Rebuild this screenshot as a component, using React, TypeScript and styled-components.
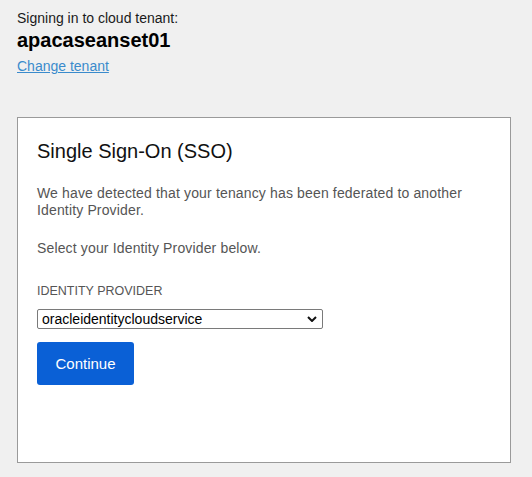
import styled, { createGlobalStyle } from "styled-components";

const GlobalStyle = createGlobalStyle`
  html, body {
    margin: 0;
    padding: 0;
    background-color: #f0f0f0;
  }
  body {
    font-family: "Liberation Sans", Arial, sans-serif;
    color: #222;
  }
`;

const Page = styled.div`
  padding: 10px 0 0 17px;
  display: flex;
  flex-direction: column;
  align-items: flex-start;
`;

const TenantHeader = styled.div`
  display: flex;
  flex-direction: column;
  align-items: flex-start;
`;

const Caption = styled.div`
  font-size: 14px;
  line-height: 16px;
  color: #1a1a1a;
`;

const TenantName = styled.div`
  font-size: 20px;
  line-height: 23px;
  font-weight: bold;
  color: #000;
  margin-top: 3px;
`;

const Link = styled.a`
  font-size: 14px;
  line-height: 16px;
  color: #3a8bcc;
  text-decoration: underline;
  margin-top: 6px;
  cursor: pointer;
`;

const Card = styled.section`
  box-sizing: border-box;
  width: 494px;
  height: 346px;
  margin-top: 43px;
  padding: 22px 19px 0 19px;
  background: #fff;
  border: 1px solid #9a9a9a;
  display: flex;
  flex-direction: column;
  align-items: flex-start;
`;

const Title = styled.h1`
  margin: 0;
  font-size: 20px;
  line-height: 23px;
  font-weight: normal;
  color: #111;
`;

const Text = styled.p<{ $gap: number }>`
  margin: ${(p) => p.$gap}px 0 0;
  font-size: 14px;
  line-height: 17px;
  letter-spacing: 0.15px;
  color: #555;
`;

const Label = styled.label`
  margin-top: 27px;
  font-size: 12.5px;
  line-height: 15px;
  color: #555;
  text-transform: uppercase;
`;

const SelectWrap = styled.div`
  position: relative;
  margin-top: 10px;
  width: 286px;
  height: 20px;
`;

const Select = styled.select`
  box-sizing: border-box;
  appearance: none;
  width: 100%;
  height: 20px;
  margin: 0;
  padding: 0 20px 0 4px;
  border: 1px solid #7a7a7a;
  border-radius: 2px;
  background: #fff;
  font-family: "Liberation Sans", Arial, sans-serif;
  font-size: 14px;
  color: #000;
  outline: none;
`;

const Chevron = styled.svg`
  position: absolute;
  right: 6px;
  top: 7px;
  pointer-events: none;
`;

const Button = styled.button`
  box-sizing: border-box;
  margin-top: 13px;
  width: 97px;
  height: 43px;
  padding: 0;
  border: none;
  border-radius: 3px;
  background-color: #0a60d6;
  color: #fff;
  font-family: "Liberation Sans", Arial, sans-serif;
  font-size: 15px;
  cursor: pointer;
`;

const App = () => {
  return (
    <>
      <GlobalStyle />
      <Page>
        <TenantHeader>
          <Caption>Signing in to cloud tenant:</Caption>
          <TenantName>apacaseanset01</TenantName>
          <Link>Change tenant</Link>
        </TenantHeader>
        <Card>
          <Title>Single Sign-On (SSO)</Title>
          <Text $gap={22}>
            We have detected that your tenancy has been federated to another
            Identity Provider.
          </Text>
          <Text $gap={21}>Select your Identity Provider below.</Text>
          <Label htmlFor="idp">Identity Provider</Label>
          <SelectWrap>
            <Select id="idp" defaultValue="oracleidentitycloudservice">
              <option value="oracleidentitycloudservice">
                oracleidentitycloudservice
              </option>
            </Select>
            <Chevron width="10" height="6" viewBox="0 0 10 6">
              <path d="M1 1 L5 5 L9 1" fill="none" stroke="#111" strokeWidth="2" />
            </Chevron>
          </SelectWrap>
          <Button>Continue</Button>
        </Card>
      </Page>
    </>
  );
};

export default App;
